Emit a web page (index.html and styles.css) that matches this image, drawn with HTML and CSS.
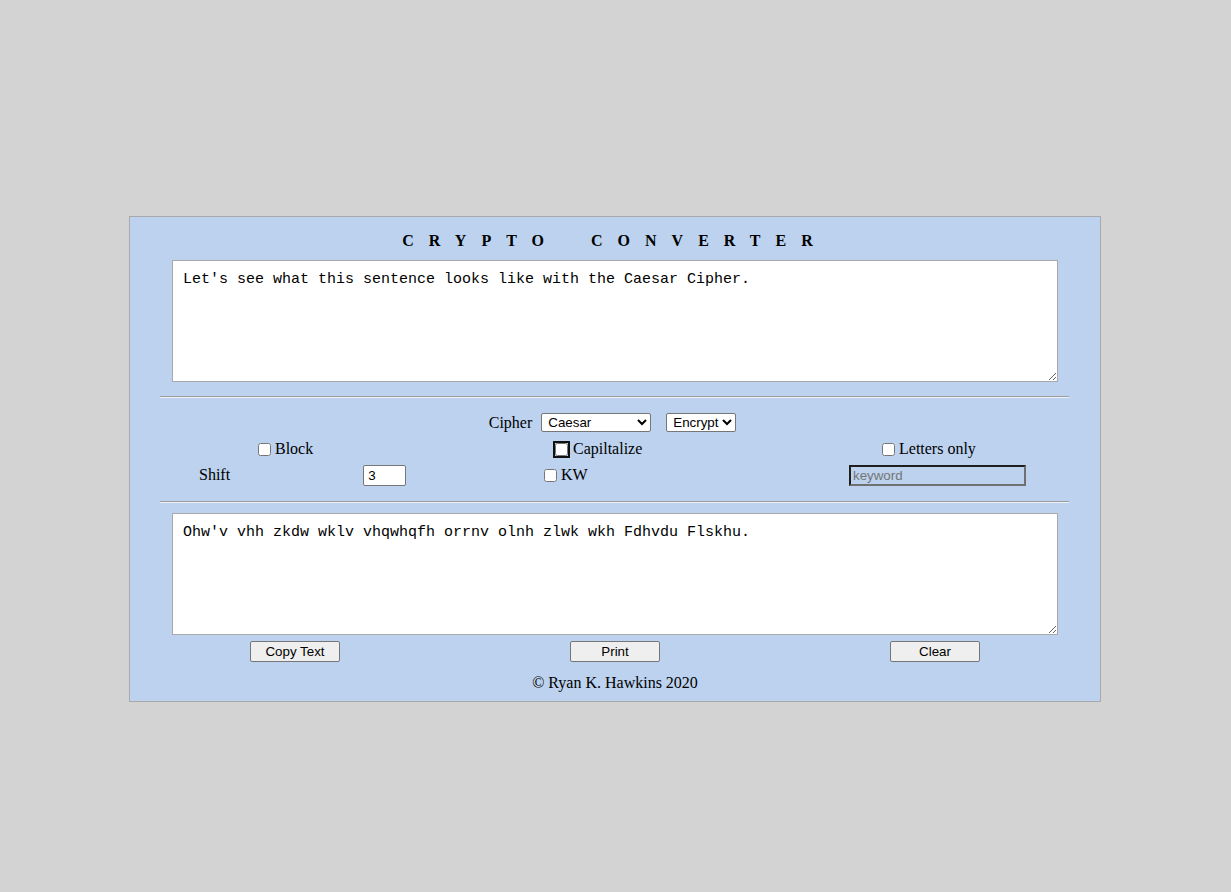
FILE: index.html
```html
<!DOCTYPE html>
<html>
<head>
<meta charset="utf-8">
<title>Crypto Converter</title>
<link rel="stylesheet" href="styles.css">
</head>
<body>
<div class="app">
  <div class="title">CRYPTO CONVERTER</div>
  <textarea class="box">Let's see what this sentence looks like with the Caesar Cipher.</textarea>
  <hr class="rule">
  <div class="row row-cipher">
    <span class="lbl">Cipher</span>
    <select class="sel sel-cipher"><option>Caesar</option><option>Vigenere</option></select>
    <select class="sel sel-mode"><option>Encrypt</option><option>Decrypt</option></select>
  </div>
  <div class="row grid3">
    <label class="cell c1a"><input type="checkbox" class="cb">Block</label>
    <label class="cell c2a"><input type="checkbox" class="cb focused">Capiltalize</label>
    <label class="cell c3a"><input type="checkbox" class="cb">Letters only</label>
  </div>
  <div class="row grid3">
    <div class="cell c1b"><span class="lbl">Shift</span><input type="text" class="num" value="3"></div>
    <label class="cell c2b"><input type="checkbox" class="cb">KW</label>
    <div class="cell c3b"><input type="text" class="kw" placeholder="keyword" disabled></div>
  </div>
  <hr class="rule rule2">
  <textarea class="box">Ohw'v vhh zkdw wklv vhqwhqfh orrnv olnh zlwk wkh Fdhvdu Flskhu.</textarea>
  <div class="grid3 buttons">
    <div class="bcell"><button class="btn">Copy Text</button></div>
    <div class="bcell"><button class="btn">Print</button></div>
    <div class="bcell"><button class="btn">Clear</button></div>
  </div>
  <div class="footer">© Ryan K. Hawkins 2020</div>
</div>
</body>
</html>
```
FILE: styles.css
```css
html, body {
  margin: 0;
  padding: 0;
}
body {
  background: #d3d3d3;
  font-family: "Liberation Serif", "Times New Roman", serif;
  font-size: 16px;
  color: #000;
}
.app {
  width: 970px;
  margin: 216px 0 0 129px;
  background: #bcd2ee;
  border: 1px solid #a9a9a9;
  padding-bottom: 9px;
}
.title {
  margin-top: 13px;
  height: 22px;
  line-height: 22px;
  text-align: center;
  font-weight: bold;
  font-size: 16px;
  letter-spacing: 15px;
  word-spacing: 13px;
}
.box {
  display: block;
  box-sizing: border-box;
  width: 886px;
  height: 122px;
  margin: 8px auto 0;
  padding: 10px;
  border: 1px solid #a9a9a9;
  background: #fff;
  font-family: "Liberation Mono", "Courier New", monospace;
  font-size: 15px;
  line-height: 17px;
  color: #000;
  resize: both;
}
.rule {
  width: 909px;
  margin: 14px 0 11px 30px;
  border: 0;
  border-top: 1px solid #9a9a9a;
  border-bottom: 1px solid #eef2f8;
  height: 0;
}
.rule2 {
  margin-top: 13px;
  margin-bottom: 10px;
}
.row {
  height: 26px;
  align-items: center;
}
.row-cipher {
  display: flex;
  justify-content: center;
  height: 27px;
  padding-right: 5px;
}
.lbl {
  line-height: 18px;
}
.sel {
  font-family: "Liberation Sans", Arial, sans-serif;
  font-size: 13.33px;
  height: 19px;
  border: 1px solid #767676;
  border-radius: 2px;
  background: #fff;
  padding: 0 0 0 2px;
}
.sel-cipher {
  width: 110px;
  margin-left: 9px;
}
.sel-mode {
  width: 70px;
  margin-left: 15px;
}
.grid3 {
  display: grid;
  grid-template-columns: 320px 320px 320px;
  padding: 0 5px;
}
.cell {
  display: flex;
  align-items: center;
  height: 26px;
}
.cb {
  width: 13px;
  height: 13px;
  margin: 3px 4px 3px 4px;
}
.focused {
  outline: 2px solid #101010;
  outline-offset: 0;
  border-radius: 2px;
  margin-left: 5px;
  margin-right: 5px;
}
.c1a { padding-left: 119px; }
.c2a { padding-left: 95px; }
.c3a { padding-left: 103px; }
.c1b { padding-left: 64px; }
.c2b { padding-left: 85px; }
.c3b { padding-left: 74px; }
.num {
  box-sizing: border-box;
  width: 43px;
  height: 21px;
  margin: 0 0 0 133px;
  padding: 1px 4px;
  border: 1px solid #767676;
  border-radius: 2px;
  font-family: "Liberation Sans", Arial, sans-serif;
  font-size: 13.33px;
  background: #fff;
}
.kw {
  box-sizing: border-box;
  width: 177px;
  height: 21px;
  margin: 0;
  padding: 1px 2px;
  border: 2px solid;
  border-color: #1f1f1f #707070 #707070 #1f1f1f;
  background: transparent;
  font-family: "Liberation Sans", Arial, sans-serif;
  font-size: 13.33px;
}
.kw::placeholder {
  color: #757575;
}
.buttons {
  margin-top: 6px;
}
.bcell {
  display: flex;
  justify-content: center;
}
.btn {
  box-sizing: border-box;
  width: 90px;
  height: 21px;
  padding: 0;
  border: 1px solid #767676;
  border-radius: 2px;
  background: #efefef;
  font-family: "Liberation Sans", Arial, sans-serif;
  font-size: 13.33px;
  color: #000;
}
.footer {
  margin-top: 12px;
  text-align: center;
  line-height: 18px;
}
```
